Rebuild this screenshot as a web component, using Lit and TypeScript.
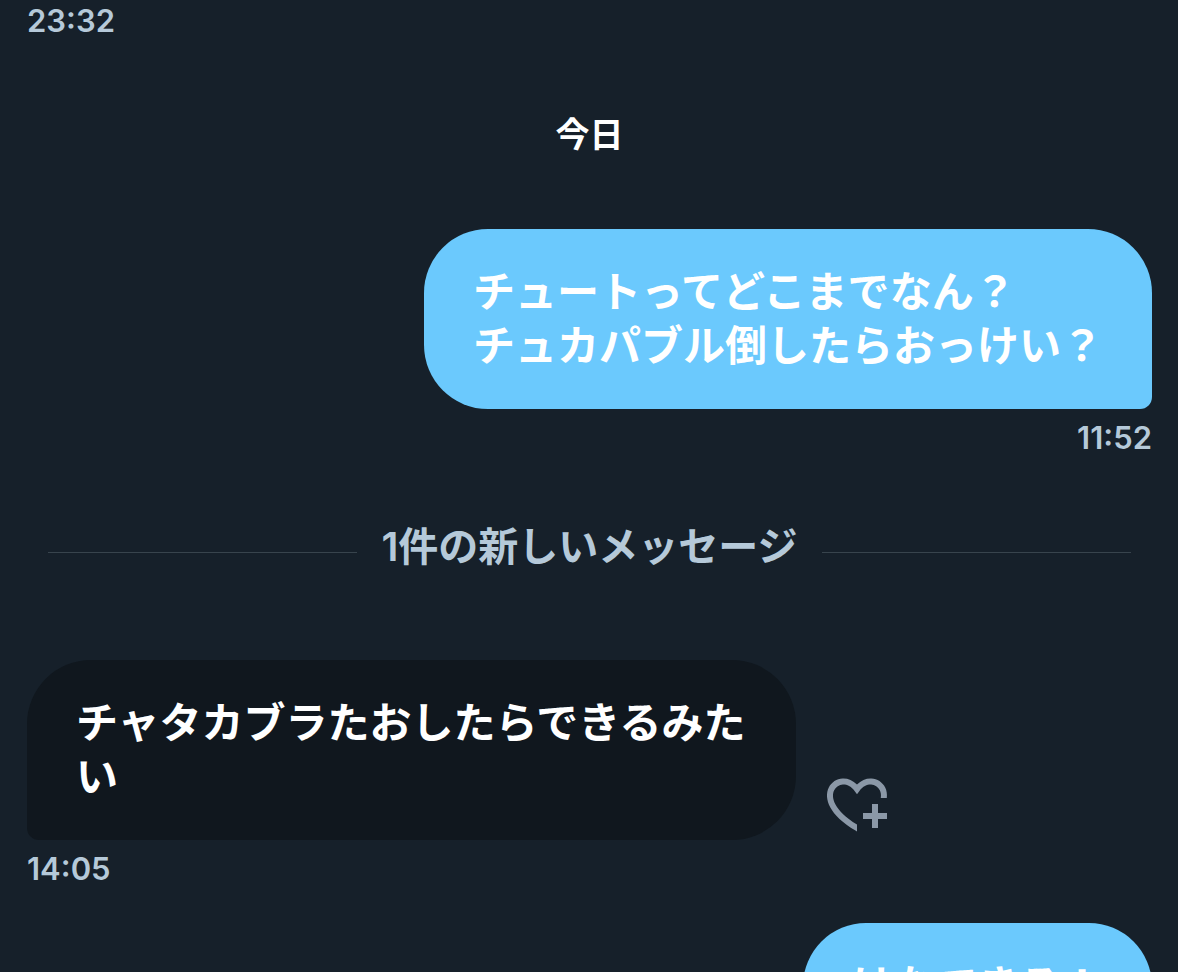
import { LitElement, html, css } from "lit";
import { customElement, property } from "lit/decorators.js";

@customElement("chat-message")
class ChatMessage extends LitElement {
  @property() text = "";
  @property() time = "";
  @property({ type: Boolean, reflect: true }) own = false;

  static styles = css`
    :host {
      display: flex;
      flex-direction: column;
      align-items: flex-start;
    }
    :host([own]) {
      align-items: flex-end;
    }
    .row {
      display: flex;
      align-items: flex-end;
      gap: 25px;
      max-width: 77%;
    }
    .bubble {
      margin: 0;
      padding: 36px 49px;
      border-radius: 64px 64px 64px 12px;
      background: #10171e;
      color: #fff;
      font-size: 42px;
      line-height: 54px;
      font-weight: 700;
      white-space: pre-wrap;
    }
    :host([own]) .bubble {
      border-radius: 64px 64px 12px 64px;
      background: #6bc9fd;
    }
    .time {
      margin-top: 8px;
      color: #b5c9d9;
      font-size: 31px;
      line-height: 42px;
      font-weight: 600;
    }
    .like {
      display: block;
      flex: none;
      padding: 0;
      border: 0;
      background: none;
      color: #8b98a7;
      cursor: pointer;
    }
    .like svg {
      display: block;
      width: 72px;
      height: 72px;
    }
  `;

  render() {
    return html`
      <div class="row">
        <p class="bubble">${this.text}</p>
        ${this.own
          ? null
          : html`<button class="like" type="button" aria-label="いいね">
              <svg viewBox="0 0 24 24" fill="currentColor">
                <path d="M17 12v3h-2.998v2h3v3h2v-3h3v-2h-3.001v-3H17zm-5 6.839c-3.871-2.34-6.053-4.639-7.127-6.609-1.112-2.04-1.031-3.7-.479-4.82.561-1.13 1.667-1.84 2.91-1.91 1.222-.06 2.68.51 3.892 2.16l.806 1.09.805-1.09c1.211-1.65 2.668-2.22 3.89-2.16 1.242.07 2.347.78 2.908 1.91.334.677.49 1.554.321 2.59h2.011c.153-1.283-.039-2.469-.539-3.48-.887-1.79-2.647-2.91-4.601-3.01-1.65-.09-3.367.56-4.796 2.01-1.43-1.45-3.147-2.1-4.798-2.01-1.954.1-3.714 1.22-4.601 3.01-.896 1.81-.846 4.17.514 6.67 1.353 2.48 4.003 5.12 8.382 7.67l.502.299v-2.32z" />
              </svg>
            </button>`}
      </div>
      <time class="time">${this.time}</time>
    `;
  }
}

@customElement("app-root")
class AppRoot extends LitElement {
  static styles = css`
    :host {
      display: block;
      height: 100vh;
      overflow: hidden;
      background: #16202a;
      font-family: Inter, "Noto Sans CJK JP", sans-serif;
    }
    .thread {
      display: flex;
      flex-direction: column;
      padding: 0 26px 0 27px;
    }
    .time {
      color: #b5c9d9;
      font-size: 31px;
      line-height: 42px;
      font-weight: 600;
    }
    .day {
      margin: 68px 0 70px;
      color: #fff;
      text-align: center;
      font-size: 34px;
      line-height: 49px;
      font-weight: 700;
    }
    .unread {
      display: flex;
      align-items: center;
      gap: 24px;
      margin: 58px 21px 73px;
    }
    .unread::before,
    .unread::after {
      content: "";
      flex: 1;
      height: 1px;
      background: #38444d;
    }
    .label {
      padding-bottom: 10px;
      color: #b5c9d9;
      font-size: 40px;
      line-height: 60px;
      font-weight: 600;
    }
    .next {
      margin-top: 33px;
    }
  `;

  render() {
    return html`
      <main class="thread" lang="ja">
        <time class="time">23:32</time>
        <h2 class="day">今日</h2>
        <chat-message own text=${"チュートってどこまでなん？\nチュカパブル倒したらおっけい？"} time="11:52"></chat-message>
        <div class="unread"><span class="label">1件の新しいメッセージ</span></div>
        <chat-message text="チャタカブラたおしたらできるみたい" time="14:05"></chat-message>
        <chat-message class="next" own text="はなできる！"></chat-message>
      </main>
    `;
  }
}
